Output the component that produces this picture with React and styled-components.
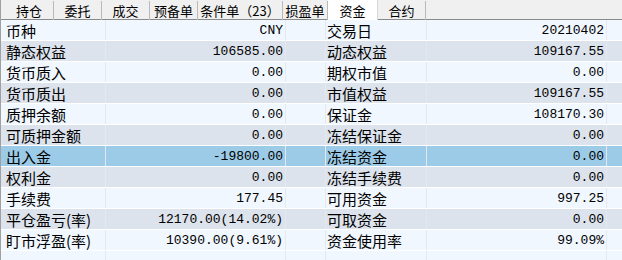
import React from 'react';
import styled, { createGlobalStyle } from 'styled-components';

const GlobalStyle = createGlobalStyle`
    html, body {
        margin: 0;
        padding: 0;
        background: #ffffff;
        overflow: hidden;
    }
`

const Panel = styled.div`
    width: 622px;
    height: 260px;
    background: #f0f7ff;
    border-left: 1px solid #a0a0a0;
    box-sizing: border-box;
    overflow: hidden;
    font-family: "Noto Sans CJK SC", "Noto Sans", sans-serif;
`

const TabBar = styled.div`
    display: flex;
    height: 20px;
    padding-left: 4px;
    background: #f0f0f0;
    border-bottom: 1px solid #8a8a8a;
    box-sizing: border-box;
`

const Tab = styled.div`
    width: ${p => p.w}px;
    height: ${p => (p.active ? 20 : 19)}px;
    display: flex;
    align-items: center;
    justify-content: center;
    font-size: 13px;
    color: #000;
    box-sizing: border-box;
    border-right: 1px solid ${p => (p.active ? '#d6d6d6' : '#b9b9b9')};
    background: ${p => (p.active ? '#ffffff' : 'transparent')};
    margin-top: ${p => (p.active ? 0 : 1)}px;
    white-space: nowrap;
`

const Row = styled.div`
    display: grid;
    grid-template-columns: 105px 180px 40px 101px 180px 1fr;
    height: 21px;
    box-sizing: border-box;
    border-bottom: 1px solid #ffffff;
    background: ${p => (p.selected ? '#9ccbe7' : p.odd ? '#dce3ec' : '#f0f7ff')};
`

const Cell = styled.div`
    display: flex;
    align-items: center;
    box-sizing: border-box;
    border-right: 1px solid ${p => (p.last ? 'transparent' : '#e4e9ef')};
    overflow: hidden;
    white-space: nowrap;
`

const Label = styled(Cell)`
    font-size: 15px;
    padding-left: ${p => p.pad}px;
    color: #000;
`

const Value = styled(Cell)`
    justify-content: flex-end;
    padding-right: 2px;
    font-family: "Liberation Mono", "DejaVu Sans Mono", monospace;
    font-size: 13px;
    color: #000;
`

const tabs = [
    { name: '持仓', w: 49 },
    { name: '委托', w: 48 },
    { name: '成交', w: 48 },
    { name: '预备单', w: 48 },
    { name: '条件单（23）', w: 85 },
    { name: '损盈单', w: 45 },
    { name: '资金', w: 50, active: true },
    { name: '合约', w: 48 },
]

const rows = [
    ['币种', 'CNY', '交易日', '20210402'],
    ['静态权益', '106585.00', '动态权益', '109167.55'],
    ['货币质入', '0.00', '期权市值', '0.00'],
    ['货币质出', '0.00', '市值权益', '109167.55'],
    ['质押余额', '0.00', '保证金', '108170.30'],
    ['可质押金额', '0.00', '冻结保证金', '0.00'],
    ['出入金', '-19800.00', '冻结资金', '0.00'],
    ['权利金', '0.00', '冻结手续费', '0.00'],
    ['手续费', '177.45', '可用资金', '997.25'],
    ['平仓盈亏(率)', '12170.00(14.02%)', '可取资金', '0.00'],
    ['盯市浮盈(率)', '10390.00(9.61%)', '资金使用率', '99.09%'],
]

const SELECTED = 6

const App = () => {
    return (
        <Panel>
            <GlobalStyle />
            <TabBar>
                {tabs.map(t => (
                    <Tab key={t.name} w={t.w} active={t.active}>{t.name}</Tab>
                ))}
            </TabBar>
            {rows.map((r, i) => (
                <Row key={r[0]} odd={i % 2 === 1} selected={i === SELECTED}>
                    <Label pad={5}>{r[0]}</Label>
                    <Value>{r[1]}</Value>
                    <Cell />
                    <Label pad={1}>{r[2]}</Label>
                    <Value>{r[3]}</Value>
                    <Cell last />
                </Row>
            ))}
            <Row>
                <Cell />
                <Cell />
                <Cell />
                <Cell />
                <Cell />
                <Cell last />
            </Row>
        </Panel>
    )
}

export default App;
